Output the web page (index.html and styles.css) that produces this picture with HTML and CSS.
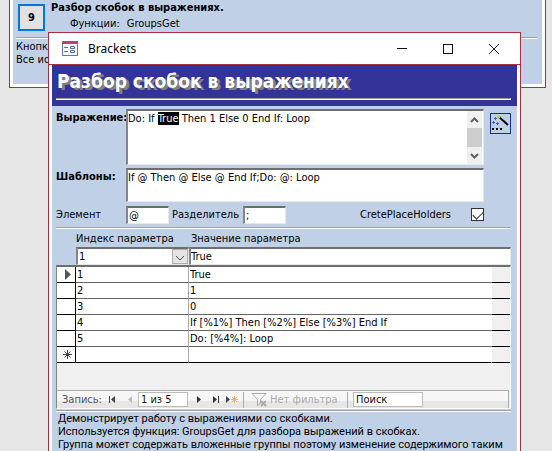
FILE: index.html
```html
<!DOCTYPE html>
<html lang="ru">
<head>
<meta charset="utf-8">
<title>Brackets</title>
<link rel="stylesheet" href="styles.css">
</head>
<body>
<main class="desktop">
  <section class="window window-back">
    <div class="example">
      <button class="example-button" type="button">9</button>
      <div class="example-text">
        <strong>Разбор скобок в выражениях.</strong>
        <span class="example-functions"><span>Функции:</span><span>GroupsGet</span></span>
      </div>
    </div>
    <hr class="rule">
    <p class="hint">Кнопк<br>Все ис</p>
  </section>

  <section class="window window-front">
    <header class="titlebar">
      <svg class="form-icon" width="16" height="16" viewBox="0 0 16 16">
        <rect x=".5" y=".5" width="15" height="14" fill="#f4f6fb" stroke="#6478a5"/>
        <path d="M0 0h16v3H0z" fill="#c04068"/>
        <path d="M2 6.500h4M2 10.500h4" stroke="#5c70a0"/>
        <path d="M8.500 5.500h4v2h-4zM8.500 9.500h4v2h-4z" fill="#fff" stroke="#5c70a0"/>
      </svg>
      <span class="caption">Brackets</span>
      <button class="winbtn" type="button" aria-label="Свернуть"><svg width="12" height="12"><path d="M1 5.500h10" stroke="#111"/></svg></button>
      <button class="winbtn" type="button" aria-label="Развернуть"><svg width="12" height="12"><rect x="1.500" y="1.500" width="9" height="9" fill="none" stroke="#111"/></svg></button>
      <button class="winbtn" type="button" aria-label="Закрыть"><svg width="12" height="12"><path d="M1 1l10 10M11 1L1 11" stroke="#222"/></svg></button>
    </header>
    <div class="banner">
      <h1>Разбор скобок в выражениях</h1>
      <hr class="rule">
    </div>
    <form class="form">
      <div class="fields">
        <label class="bold" for="expr">Выражение:</label>
        <div class="sunken memo memo-tall">
          <textarea id="expr" spellcheck="false">Do: If True Then 1 Else 0 End If: Loop</textarea>
          <div class="scrollbar">
            <svg width="15" height="17"><path d="M4 11l3.500-3.500L11 11" fill="none" stroke="#606060" stroke-width="2"/></svg>
            <div class="thumb"></div>
            <svg width="15" height="17"><path d="M4 7l3.500 3.500L11 7" fill="none" stroke="#606060" stroke-width="2"/></svg>
          </div>
        </div>
        <button class="wizard" type="button" aria-label="Построить">
          <svg width="19" height="19" viewBox="0 0 19 19">
            <path d="M7 2l10 9" stroke="#000" stroke-width="2"/>
            <path d="M6 1l3 2.700" stroke="#d8dc28" stroke-width="2"/>
            <path d="M3 4.500h3M4.500 3v3M1 8.500h3M2.500 7v3M5 9.500h3M6.500 8v3" stroke="#5058b0"/>
            <path d="M1 14h2v2H1zM5 14h2v2H5zM9 14h2v2H9z" fill="#000"/>
          </svg>
        </button>
        <label class="bold" for="tpl">Шаблоны:</label>
        <div class="sunken memo">
          <textarea id="tpl" spellcheck="false">If @ Then @ Else @ End If;Do: @: Loop</textarea>
        </div>
      </div>
      <div class="options">
        <label class="first" for="item">Элемент</label>
        <input class="sunken short" id="item" value="@">
        <label class="second" for="sep">Разделитель</label>
        <input class="sunken short" id="sep" value=";">
        <label class="place" for="ph">CretePlaceHolders</label>
        <input class="check" id="ph" type="checkbox" checked>
      </div>
      <hr class="rule">
      <div class="params">
        <label for="idx">Индекс параметра</label>
        <label class="value-label" for="val">Значение параметра</label>
        <div class="combo sunken">
          <select id="idx"><option>1</option></select>
          <svg class="arrow" width="16" height="15"><rect x=".5" y=".5" width="15" height="14" fill="#e4e4e4" stroke="#adadad"/><path d="M4 7l4 4 4-4" fill="none" stroke="#505050"/></svg>
        </div>
        <input class="sunken" id="val" value="True">
      </div>
      <div class="subform">
        <table>
          <tbody>
            <tr><td class="selector"><svg width="16" height="13"><path d="M8 1l6 5.500L8 12z" fill="#555"/></svg></td><td class="index">1</td><td>True</td><td class="track"></td></tr>
            <tr><td class="selector"></td><td class="index">2</td><td>1</td><td class="track"></td></tr>
            <tr><td class="selector"></td><td class="index">3</td><td>0</td><td class="track"></td></tr>
            <tr><td class="selector"></td><td class="index">4</td><td>If [%1%] Then [%2%] Else [%3%] End If</td><td class="track"></td></tr>
            <tr><td class="selector"></td><td class="index">5</td><td>Do: [%4%]: Loop</td><td class="track"></td></tr>
            <tr><td class="selector"><svg width="16" height="13"><path d="M10.500 2v9M6 6.500h9M7.500 3.500l6 6M13.500 3.500l-6 6" stroke="#444"/></svg></td><td class="index"></td><td></td><td class="track"></td></tr>
          </tbody>
        </table>
        <nav class="recordnav">
          <label for="rec">Запись:</label>
          <button type="button" aria-label="Первая запись"><svg width="9" height="9"><path d="M1 1h1v7H1zM7 1v7L3 4.500z" fill="#444"/></svg></button>
          <button type="button" aria-label="Предыдущая запись" disabled><svg width="9" height="9"><path d="M7 1v7L3 4.500z" fill="#bbb"/></svg></button>
          <input class="rec" id="rec" value="1 из 5">
          <button type="button" aria-label="Следующая запись"><svg width="9" height="9"><path d="M3 1v7l4-3.500z" fill="#333"/></svg></button>
          <button type="button" aria-label="Последняя запись"><svg width="9" height="9"><path d="M2 1v7l4-3.500zM7 1h1v7H7z" fill="#333"/></svg></button>
          <button class="new" type="button" aria-label="Новая запись"><svg width="14" height="9"><path d="M1 1v7l4-3.500z" fill="#444"/><path d="M9.500 1v7M6 4.500h7M7 2l5 5M12 2L7 7" stroke="#eeb060"/></svg></button>
          <button class="filter" type="button" disabled><svg width="17" height="16"><path d="M1 1.500h14l-5.500 6v4l-3 2v-6z" fill="none" stroke="#aaa"/><path d="M10 9l5 5M15 9l-5 5" stroke="#aaa" stroke-width="2"/></svg>Нет фильтра</button>
          <input class="search" aria-label="Поиск" value="Поиск">
        </nav>
      </div>
      <hr class="rule">
      <p class="about">Демонстрирует работу с выражениями со скобками.<br>Используется функция: GroupsGet для разбора выражений в скобках.<br>Группа может содержать вложенные группы поэтому изменение содержимого таким</p>
    </form>
  </section>
</main>
<script src="app.js"></script>
</body>
</html>
```
FILE: styles.css
```css
* { box-sizing: border-box; }
body {
  margin: 0;
  font: 11px/13px "DejaVu Sans Condensed", "DejaVu Sans", sans-serif;
  font-stretch: condensed;
  color: #000;
}
button, input, select, textarea { font: inherit; color: inherit; margin: 0; padding: 0; border: 0; border-radius: 0; background: none; outline: 0; }
p, h1 { margin: 0; }
svg { display: block; flex: none; }
.desktop { position: relative; height: 100vh; overflow: hidden; background: #e6e6e6; }
.window { position: absolute; background: #fff; border: 1px solid #a83038; }
.rule { margin: 0; border: 0; height: 2px; background: #fff; border-top: 1px solid #a0a0a0; }

.window-back { top: 0; left: 9px; right: 6px; border-top: 0; padding: 0 3px 3px; }
.window-back > * { background-color: #c0d1e7; }
.example { display: flex; gap: 6px; height: 37px; padding: 0 5px; }
.example-button { width: 27px; height: 27px; margin-top: 4px; border: 2px solid #0078d7; background: #e1e1e1; font-weight: bold; }
.example-text { display: flex; flex-direction: column; gap: 3px; padding-top: 1px; }
.example-functions { display: flex; gap: 7px; padding-left: 19px; }
.window-back .rule { background: #fff; box-shadow: -3px 0 #c0d1e7, 5px 0 #c0d1e7; margin: 0 5px 0 3px; }
.hint { height: 45px; padding: 1px 3px; }

.window-front { top: 32px; left: 48px; right: 31px; padding: 0 3px; }
.titlebar { display: flex; align-items: center; height: 32px; margin: 0 -3px; padding: 0 3px 0 13px; border-bottom: 1px solid #a83038; }
.caption { flex: 1; padding-left: 10px; font: 12px/16px "Noto Sans", sans-serif; }
.winbtn { display: grid; place-items: center; width: 46px; height: 30px; }
.banner { background: #333399; height: 41px; padding: 3px 6px 0 4px; }
h1 { padding-left: 1px; font-size: 19px; line-height: 26px; font-weight: bold; color: #fff; text-shadow: 3px 2px #808080; white-space: nowrap; }
.banner .rule { margin-top: 4px; }
.form { background: #c0d1e7; padding: 3px 6px 20px 4px; }
.bold { font-weight: bold; padding-top: 2px; white-space: nowrap; }
.fields { display: grid; grid-template-columns: 70px 1fr 21px; row-gap: 3px; }
.sunken { background: #fff; border: 1px solid #e8e8e8; border-top: 2px solid #6e6e6e; border-left: 2px solid #858585; }
.memo { display: flex; height: 34px; margin-right: 6px; }
.memo-tall { height: 56px; }
textarea { flex: 1; min-width: 0; resize: none; overflow: hidden; caret-color: transparent; padding: 1px 0; }
textarea::selection { background: #000; color: #fff; }
.scrollbar { display: flex; flex-direction: column; width: 15px; margin-right: 1px; background: #f0f0f0; }
.thumb { flex: 1; background: #cdcdcd; }
.wizard { width: 21px; height: 21px; margin-top: 4px; border: 1px solid #103080; }
.options { display: flex; align-items: center; height: 25px; padding-right: 27px; }
.options .first { width: 70px; }
.options .short { width: 43px; height: 18px; padding-left: 1px; }
.options .second { width: 74px; padding-left: 3px; }
.place { margin-left: auto; }
.check { appearance: none; width: 13px; height: 13px; margin-left: 20px; border: 1px solid #333; background: #fff; }
.check:checked::before { content: ""; display: block; width: 9px; height: 5px; margin: 2px 1px; border: solid #333; border-width: 0 0 1px 1px; transform: rotate(-45deg); }
.params { display: grid; grid-template-columns: 113px 1fr; grid-template-rows: 18px 18px; padding-left: 20px; align-items: center; }
.params .sunken { height: 18px; }
.value-label { padding-left: 2px; }
.combo { display: flex; }
.combo select { flex: 1; min-width: 0; appearance: none; padding-left: 1px; }
.subform { border: 1px solid #fff; border-top: 2px solid #6e6e6e; border-left: 1px solid #858585; background: #f0f0f0; }
table { width: 100%; border-collapse: separate; border-spacing: 0; table-layout: fixed; }
td { height: 16px; padding: 0 0 0 1px; border-bottom: 1px solid #666; background: #fff; line-height: 13px; white-space: nowrap; }
.selector { width: 19px; padding: 0; border-right: 1px solid #000; border-bottom-color: #000; }
.index { width: 113px; border-right: 1px solid #aaa; }
.track { width: 19px; background: #f0f0f0; border-bottom-color: #000; border-left: 1px solid #fff; }
tr:last-child td { border-bottom-color: #000; }
.recordnav { display: flex; align-items: center; height: 18px; margin: 27px 1px 0 0; padding-left: 5px; border-top: 1px solid #aaa; border-right: 1px solid #aaa; background: linear-gradient(#f6f6f6 60%, #e6e6e6 60%); color: #555; }
.recordnav label { width: 42px; }
.recordnav button { display: flex; justify-content: center; flex: none; width: 17px; }
.recordnav .rec { width: 50px; height: 15px; margin: 0 2px 0 0; padding-left: 2px; border: 1px solid #bbb; background: #fff; color: #111; }
.recordnav .new { width: 16px; }
.recordnav .filter { justify-content: flex-start; align-items: center; gap: 2px; width: 105px; height: 16px; padding-left: 7px; margin-left: 3px; border: solid #aaa; border-width: 0 1px; color: #aaa; white-space: nowrap; }
.recordnav .search { width: 70px; height: 15px; margin-left: 5px; padding-left: 2px; border: 1px solid #bbb; background: #fff; color: #111; }
.subform + .rule { margin-top: 1px; }
.about { padding: 0 2px; font-family: Roboto, sans-serif; font-stretch: normal; white-space: nowrap; }
```
FILE: app.js
```js
// Select the group that is being parsed in the expression box.
const expression = document.getElementById("expr");
expression.focus();
expression.setSelectionRange(7, 11);
```
